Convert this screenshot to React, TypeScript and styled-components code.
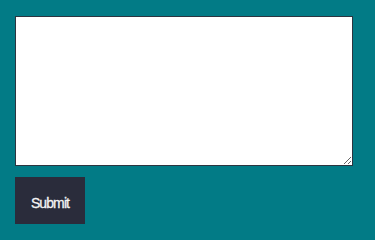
import React from "react";
import styled, { createGlobalStyle } from "styled-components";

const GlobalStyle = createGlobalStyle`
  html, body {
    margin: 0;
    padding: 0;
    background: #027b86;
    overflow: hidden;
  }
  body {
    font-family: "Liberation Sans", sans-serif;
  }
`;

export default function App() {
  return (
    <Root>
      <GlobalStyle />
      <Form onSubmit={(e) => e.preventDefault()}>
        <TextArea />
        <SubmitButton type="submit">Submit</SubmitButton>
      </Form>
    </Root>
  );
}

const Root = styled.div`
  height: 100vh;
  padding: 16px 15px;
  box-sizing: border-box;
`;
const Form = styled.form`
  display: flex;
  flex-direction: column;
  align-items: flex-start;
  gap: 11px;
`;
const TextArea = styled.textarea`
  display: block;
  width: 338px;
  height: 150px;
  box-sizing: border-box;
  margin: 0;
  border: 1px solid #2c3540;
  background: #fff;
  resize: vertical;
  outline: none;
`;
const SubmitButton = styled.button`
  width: 70px;
  height: 47px;
  padding: 5px 0 0;
  border: none;
  border-radius: 0;
  background: #2a2c3b;
  color: #f4f4f4;
  font-family: "Liberation Sans", Arial, sans-serif;
  font-size: 14px;
  font-weight: 400;
  letter-spacing: -0.9px;
  -webkit-text-stroke: 0.3px #f4f4f4;
  cursor: pointer;
`;
